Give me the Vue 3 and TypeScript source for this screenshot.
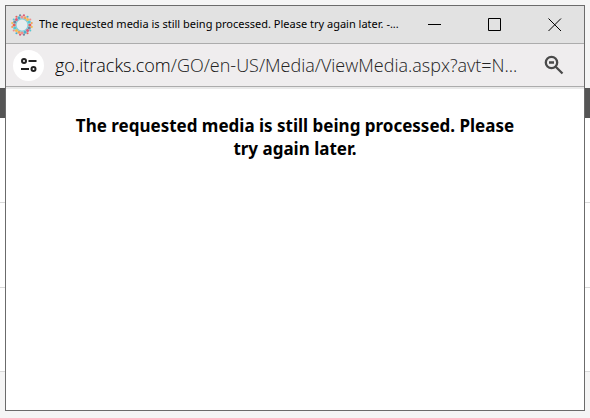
<script setup lang="ts">
interface Dot {
  x: number
  y: number
  size: number
  color: string
}

const palette: string[] = ['#e8605a', '#4fb0cb', '#f2bd55', '#6f86a0', '#ee8f8f', '#55c8d2', '#dc5a78', '#f2a05a']

function ring(count: number, radius: number, size: number, shift: number): Dot[] {
  return Array.from({ length: count }, (_, i) => {
    const angle = ((i + shift) / count) * Math.PI * 2
    return {
      x: 11 + Math.cos(angle) * radius,
      y: 11 + Math.sin(angle) * radius,
      size,
      color: palette[(i * 3 + Math.round(radius)) % palette.length],
    }
  })
}

const dots: Dot[] = [...ring(16, 9.9, 1.1, 0.5), ...ring(16, 7.9, 1.5, 0)]

const title = 'The requested media is still being processed. Please try again later. -...'
const host = 'go.itracks.com'
const path = '/GO/en-US/Media/ViewMedia.aspx?avt=N...'
</script>

<template>
  <div class="desktop">
    <div class="backdrop" aria-hidden="true">
      <div class="backdrop-top"></div>
      <div class="backdrop-bar"></div>
      <div class="backdrop-row"></div>
      <div class="backdrop-row"></div>
      <div class="backdrop-row last"></div>
      <div class="backdrop-rest"></div>
    </div>

    <section class="window">
      <header class="titlebar">
        <svg class="favicon" viewBox="0 0 22 22" aria-hidden="true">
          <circle cx="11" cy="11" r="6.2" fill="none" stroke="#86cfdc" stroke-width="1.6" />
          <circle cx="11" cy="11" r="5.2" fill="#e6ecee" />
          <circle v-for="(dot, i) in dots" :key="i" :cx="dot.x" :cy="dot.y" :r="dot.size" :fill="dot.color" />
        </svg>
        <span class="title">{{ title }}</span>
        <div class="controls">
          <button type="button" aria-label="Minimize">
            <svg viewBox="0 0 14 14"><path d="M0 6.5H13" /></svg>
          </button>
          <button type="button" aria-label="Maximize">
            <svg viewBox="0 0 14 14"><path d="M0.5 0.5H12.5V12.5H0.5Z" /></svg>
          </button>
          <button type="button" aria-label="Close">
            <svg viewBox="0 0 14 14"><path d="M0.5 0.5L13 13M13 0.5L0.5 13" /></svg>
          </button>
        </div>
      </header>

      <div class="addressbar">
        <button type="button" class="site-info" aria-label="View site information">
          <svg viewBox="0 0 16 16">
            <circle cx="3" cy="4" r="2" />
            <path d="M7.5 4H15.5M0 12H8" />
            <circle cx="12.5" cy="12" r="2" />
          </svg>
        </button>
        <div class="url"><span class="host">{{ host }}</span>{{ path }}</div>
        <button type="button" class="zoom" aria-label="Zoom">
          <svg viewBox="0 0 20 20">
            <circle cx="7.5" cy="7.5" r="5.7" />
            <path d="M5 7.5H10M11.7 11.7L18.5 18.5" />
          </svg>
        </button>
      </div>

      <main class="content">
        <h1>The requested media is still being processed. Please try again later.</h1>
      </main>
    </section>
  </div>
</template>

<style>
body {
  margin: 0;
}
</style>

<style scoped>
.desktop {
  display: grid;
  min-height: 100vh;
  font-family: "Open Sans", "Noto Sans", sans-serif;
}

.backdrop,
.window {
  grid-area: 1 / 1;
  min-width: 0;
}

.backdrop {
  display: flex;
  flex-direction: column;
  background: #f5f5f5;
}

.backdrop-top {
  height: 88px;
}

.backdrop-bar {
  height: 30px;
  background: #555;
}

.backdrop-row {
  height: 84px;
  background: #fff;
  border-bottom: 1px solid #d9d9d9;
}

.backdrop-row.last {
  height: 83px;
}

.backdrop-rest {
  flex: 1;
}

.window {
  display: flex;
  flex-direction: column;
  margin: 5px 5px 7px;
  border: 1px solid #6b6b6b;
  background: #fff;
}

button {
  display: flex;
  align-items: center;
  justify-content: center;
  padding: 0;
  border: 0;
  background: none;
  color: inherit;
}

svg {
  fill: none;
  stroke: currentColor;
}

.titlebar {
  display: flex;
  align-items: center;
  height: 37px;
  padding-left: 5px;
  border-bottom: 1px solid #acacac;
  background: #e2e2e2;
  color: #000;
}

.favicon {
  flex: none;
  width: 22px;
  height: 22px;
  margin-right: 6px;
  stroke: none;
}

.title {
  flex: 1;
  min-width: 0;
  overflow: hidden;
  font-family: "Noto Sans", "Open Sans", sans-serif;
  font-size: 11px;
  line-height: 18px;
  padding-bottom: 2px;
  white-space: nowrap;
}

.controls {
  display: flex;
  height: 100%;
  margin-right: -1px;
}

.controls button {
  width: 60px;
}

.controls svg {
  width: 14px;
  height: 14px;
}

.addressbar {
  display: flex;
  align-items: center;
  height: 42px;
  padding: 0 20px 0 7px;
  border-bottom: 1px solid #acacac;
  background: #efedee;
  color: #4a4a4a;
}

.site-info {
  flex: none;
  width: 31px;
  height: 31px;
  margin-right: 11px;
  border-radius: 50%;
  background: #fff;
  color: #222;
}

.site-info svg {
  width: 16px;
  height: 16px;
  stroke-width: 2;
}

.url {
  flex: 1;
  min-width: 0;
  overflow: hidden;
  font-size: 18px;
  font-weight: 300;
  line-height: 28px;
  white-space: nowrap;
  color: #222;
}

.host {
  color: #000;
}

.zoom svg {
  width: 20px;
  height: 20px;
  stroke-width: 2.3;
}

.content {
  flex: 1;
  padding: 25px 64px;
  border-top: 2px solid #e9e9e9;
}

h1 {
  margin: 0;
  font-family: "Noto Sans", "Open Sans", sans-serif;
  font-size: 17px;
  font-weight: 700;
  line-height: 23px;
  text-align: center;
  color: #000;
}
</style>
